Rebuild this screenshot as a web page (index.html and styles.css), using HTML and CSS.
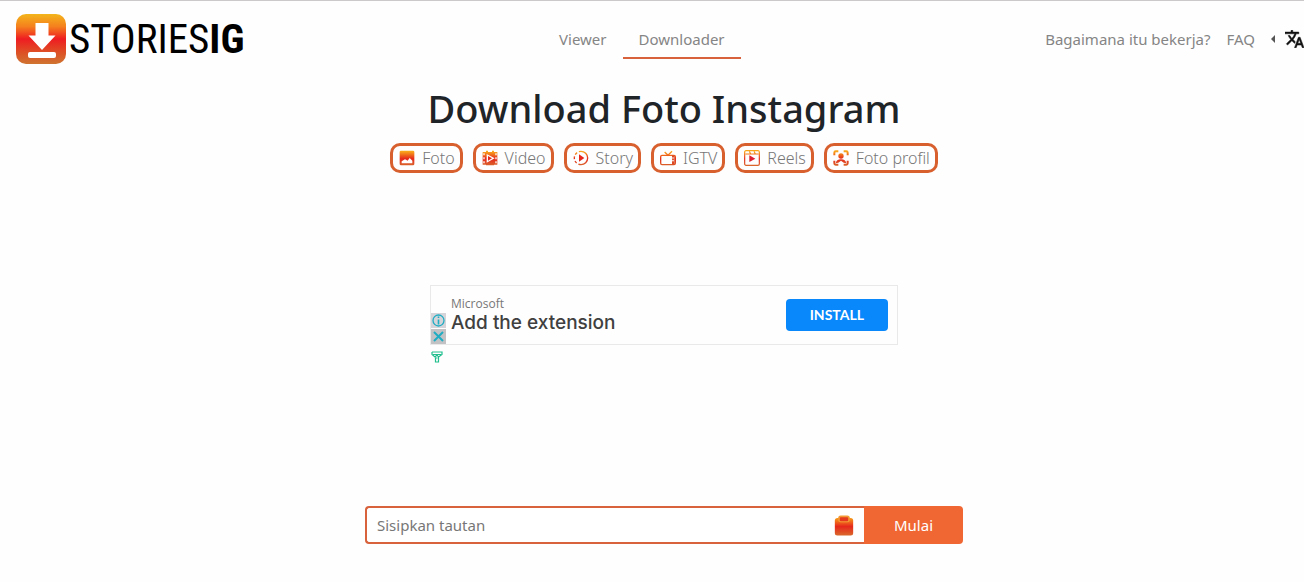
FILE: index.html
```html
<!DOCTYPE html>
<html lang="id">
<head>
<meta charset="utf-8">
<meta name="viewport" content="width=device-width, initial-scale=1">
<title>StoriesIG</title>
<link rel="stylesheet" href="styles.css">
</head>
<body>
<svg class="defs" width="0" height="0" aria-hidden="true">
  <defs>
    <linearGradient id="fire" x1="0" y1="0" x2="0" y2="24" gradientUnits="userSpaceOnUse">
      <stop offset="0.1" stop-color="#f8a51b"/><stop offset="0.55" stop-color="#e6281c"/><stop offset="1" stop-color="#d9692b"/>
    </linearGradient>
    <linearGradient id="logo-fill" x1="0" y1="0" x2="0" y2="1">
      <stop offset="0" stop-color="#f3b51b"/><stop offset="0.25" stop-color="#f5801e"/><stop offset="0.5" stop-color="#ee1c22"/><stop offset="0.75" stop-color="#df4d25"/><stop offset="1" stop-color="#cf7430"/>
    </linearGradient>
  </defs>
</svg>
<header class="header">
  <a class="brand" href="#">
    <svg class="brand-icon" viewBox="0 0 50 50" aria-hidden="true">
      <rect width="50" height="50" rx="10" fill="url(#logo-fill)"/>
      <path d="M19.500 9h13v12.500h7L26 36 12.500 21.500h7z" fill="#fff"/>
      <rect x="12" y="38" width="28" height="6" rx="2" fill="#fff"/>
    </svg>
    <span class="brand-name">STORIES<b>IG</b></span>
  </a>
  <nav class="tabs">
    <a class="tab" href="#">Viewer</a>
    <a class="tab tab-active" href="#">Downloader</a>
  </nav>
  <nav class="links">
    <a href="#">Bagaimana itu bekerja?</a>
    <a href="#">FAQ</a>
    <button class="language" type="button" aria-label="Bahasa">
      <svg class="caret" viewBox="0 0 4 8" aria-hidden="true"><path d="M4 0v8L0 4z" fill="#555"/></svg>
      <svg class="translate" viewBox="1 2 22 20" aria-hidden="true"><path fill="#111" stroke="#111" stroke-width="0.600" d="M12.870 15.070l-2.540-2.510.03-.03A17.520 17.520 0 0 0 14.070 6H17V4h-7V2H8v2H1v2h11.170C11.500 7.920 10.440 9.750 9 11.350 8.070 10.320 7.300 9.190 6.690 8h-2c.73 1.630 1.730 3.170 2.980 4.560l-5.090 5.020L4 19l5-5 3.110 3.110.76-2.040zM18.500 10h-2L12 22h2l1.120-3h4.750L21 22h2l-4.500-12zm-2.620 7l1.620-4.330L19.120 17h-3.240z"/></svg>
    </button>
  </nav>
</header>
<main class="main">
  <h1 class="title">Download Foto Instagram</h1>
  <nav class="types">
    <a class="type" href="#"><svg viewBox="0 0 24 24" aria-hidden="true"><path fill="url(#fire)" fill-rule="evenodd" d="M3 1h18q2 0 2 2v18q0 2-2 2H3q-2 0-2-2V3q0-2 2-2zM4 20h16v-4l-4-4-3 4-4-2-5 3z"/></svg>Foto</a>
    <a class="type" href="#"><svg viewBox="0 0 24 24" aria-hidden="true"><path fill="url(#fire)" fill-rule="evenodd" d="M1 3h5V1h3v2h6V1h3v2h5v19h-5v1H6v-1H1zM7 6v13l12-6.500zM2 5v3h2V5zm18 0v3h2V5zM2 11v3h2v-3zm18 0v3h2v-3zM2 17v3h2v-3zm18 0v3h2v-3z"/><path fill="#e6281c" d="M9 9v7l6-3.500z"/></svg>Video</a>
    <a class="type" href="#"><svg viewBox="0 0 24 24" aria-hidden="true"><path d="M12 2a10 10 0 0 1 0 20" fill="none" stroke="url(#fire)" stroke-width="2"/><path d="M12 22a10 10 0 0 1 0-20" fill="none" stroke="url(#fire)" stroke-width="2" stroke-dasharray="4 3"/><path d="M9 6.500v11l8-5.500z" fill="#e6281c"/></svg>Story</a>
    <a class="type" href="#"><svg viewBox="0 0 24 24" aria-hidden="true"><g fill="none" stroke="url(#fire)" stroke-width="2"><rect x="1" y="8" width="22" height="14" rx="2"/><path d="M7 3l5 5 6-6"/></g><path d="M18 8h4v14h-4z" fill="#dc4a25"/><circle cx="19.500" cy="12" r="1.200" fill="#fff"/><circle cx="19.500" cy="16" r="1.200" fill="#fff"/></svg>IGTV</a>
    <a class="type" href="#"><svg viewBox="0 0 24 24" aria-hidden="true"><g fill="none" stroke="url(#fire)" stroke-width="1.800"><rect x="1" y="1" width="22" height="22" rx="2"/><path d="M2 6h20M8 2l2 4M15 2l2 4"/></g><path d="M8 8v10l9-5z" fill="#dc2032"/></svg>Reels</a>
    <a class="type" href="#"><svg viewBox="0 0 24 24" aria-hidden="true"><path d="M2 8V4q0-2 2-2h4M16 2h4q2 0 2 2v4M22 16v4q0 2-2 2h-4M8 22H4q-2 0-2-2v-4" fill="none" stroke="url(#fire)" stroke-width="3"/><circle cx="12" cy="9" r="4" fill="url(#fire)"/><path d="M4 20q1-6 8-6t8 6l-4-1-4-3-4 3z" fill="url(#fire)"/></svg>Foto profil</a>
  </nav>
  <aside class="ad">
    <div class="ad-box">
      <div class="ad-tools">
        <button type="button" aria-label="Info"><svg viewBox="0 0 15 15" aria-hidden="true"><circle cx="7.500" cy="7.500" r="5.500" fill="none" stroke="#20adc4" stroke-width="1.300"/><path d="M7.500 3.500v1.500M7.500 6.500v5" stroke="#20adc4" stroke-width="1.600"/></svg></button>
        <button class="ad-close" type="button" aria-label="Tutup"><svg viewBox="0 0 15 15" aria-hidden="true"><path d="M3 3l9 9M12 3l-9 9" stroke="#20adc4" stroke-width="2"/></svg></button>
      </div>
      <div class="ad-copy"><span class="ad-brand">Microsoft</span><span class="ad-title">Add the extension</span></div>
      <a class="install" href="#">INSTALL</a>
    </div>
    <svg class="ad-mark" viewBox="0 0 12 12" aria-hidden="true"><path d="M1 1h10v2.500L7.500 6v5h-3V7h2M1 1v2.500L4 6l2-2 1.500 2M2 3.500h8" fill="none" stroke="#20bd8d" stroke-width="1.200"/></svg>
  </aside>
  <form class="search">
    <div class="field">
      <input type="text" aria-label="Sisipkan tautan" placeholder="Sisipkan tautan">
      <button class="paste" type="button" aria-label="Tempel"><svg viewBox="0 0 24 24" aria-hidden="true"><rect x="1" y="3" width="22" height="21" rx="3" fill="url(#fire)"/><rect x="5" y="0" width="14" height="8" rx="3" fill="#f39a35"/><rect x="7" y="2" width="10" height="5" rx="1" fill="#e43b20"/></svg></button>
    </div>
    <button class="submit" type="submit">Mulai</button>
  </form>
</main>
</body>
</html>
```
FILE: styles.css
```css
* { box-sizing: border-box; }
body {
  margin: 0;
  border-top: 1px solid #cbc9ca;
  background: #fefefe;
  color: #777;
  font: 300 16px/24px "Noto Sans", "Open Sans", sans-serif;
}
a { color: inherit; text-decoration: none; }
button { padding: 0; border: 0; background: none; font: inherit; }
svg { display: block; }
.defs { position: absolute; }
.header {
  display: flex;
  align-items: center;
  justify-content: space-between;
  height: 76px;
  padding-left: 16px;
}
.brand { display: flex; align-items: center; gap: 3px; color: #000; }
.brand-icon { width: 50px; height: 50px; }
.brand-name { font: 400 41px/50px "Roboto Condensed", "Liberation Sans", sans-serif; }
.tabs, .links { color: #858585; font-size: 15px; font-weight: 400; }
.tabs { display: flex; }
.tab { padding: 7px 16px 6px; border-bottom: 2px solid transparent; }
.tab-active { border-color: #d8623c; }
.links { display: flex; align-items: center; gap: 16px; padding-left: 6px; }
.language { display: flex; align-items: center; gap: 10px; }
.caret { width: 4px; height: 8px; }
.translate { width: 19px; height: 18px; }
.main {
  display: flex;
  flex-direction: column;
  align-items: center;
  padding: 7px 0 38px 24px;
}
.title { margin: 0; color: #1e2427; font-size: 38px; font-weight: 500; line-height: 48px; }
.types { display: flex; flex-wrap: wrap; gap: 10px; margin-top: 11px; }
.type {
  display: flex;
  align-items: center;
  gap: 7px;
  padding: 0 5px 0 6px;
  border: 3px solid #d8602f;
  border-radius: 10px;
}
.type svg { width: 16px; height: 16px; }
.ad { width: 100%; max-width: 468px; margin-top: 112px; }
.ad-box {
  display: flex;
  align-items: center;
  height: 60px;
  padding-right: 9px;
  border: 1px solid #e9e9e9;
}
.ad-tools { align-self: flex-end; display: flex; flex-direction: column; gap: 1px; }
.ad-tools button { background: #d5d5d9; }
.ad-tools svg { width: 15px; height: 15px; }
.ad-tools .ad-close { background: #c2c2c5; }
.ad-copy { display: flex; flex: 1; flex-direction: column; padding-left: 5px; }
.ad-brand { font: 400 12px/15px "Open Sans", sans-serif; }
.ad-title { color: #404040; font: 500 19px/24px Inter, sans-serif; }
.install {
  padding: 0 24px;
  border-radius: 4px;
  background: #0888fb;
  color: #fff;
  font: 700 14px/32px Lato, sans-serif;
}
.ad-mark { width: 12px; height: 12px; margin: 6px 1px; }
.search { display: flex; width: 100%; max-width: 598px; margin-top: 137px; }
.field {
  display: flex;
  flex: 1;
  align-items: center;
  padding: 0 10px;
  border: 2px solid #d8623c;
  border-right: 0;
  border-radius: 4px 0 0 4px;
  background: #fff;
}
.field input { flex: 1; min-width: 0; padding: 0; border: 0; outline: 0; background: none; color: #555; font: 400 15px/24px "Noto Sans", sans-serif; }
.field input::placeholder { color: #777; opacity: 1; }
.paste svg { width: 20px; height: 21px; }
.submit { width: 99px; height: 38px; border-radius: 0 4px 4px 0; background: #f06733; color: #fff; font-size: 15px; font-weight: 400; }
```
